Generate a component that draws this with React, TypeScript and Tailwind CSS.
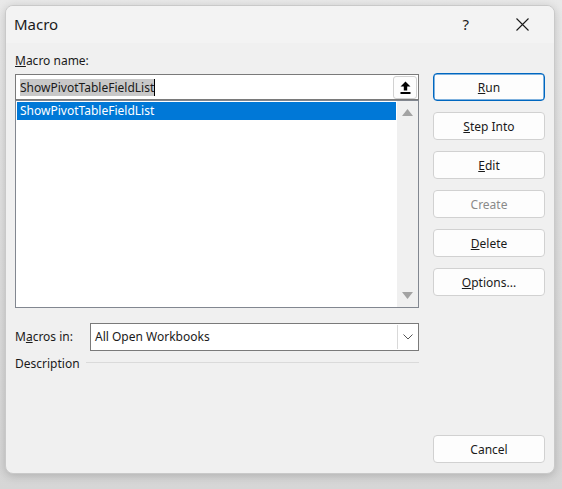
import React from 'react';

const font = { fontFamily: '"Noto Sans", "Open Sans", sans-serif' };

function Btn({ children, focused, disabled }: { children: React.ReactNode; focused?: boolean; disabled?: boolean }) {
  return (
    <button
      className={`h-[28px] w-[112px] rounded-[4px] bg-[#fdfdfd] pt-[2px] text-[12px] ${
        focused ? 'border border-[#0067c0] shadow-[inset_0_0_0_0.5px_#0067c0]' : 'border border-[#d1d1d1]'
      } ${disabled ? 'text-[#8a8a8a]' : 'text-[#1a1a1a]'}`}
    >
      {children}
    </button>
  );
}

export default function App() {
  return (
    <div className="h-[489px] w-[562px] bg-gradient-to-b from-[#e9e9e9] to-[#d6d6d6] pl-[5px] pt-[5px]" style={font}>
      <div className="flex h-[469px] w-[550px] flex-col overflow-hidden rounded-[8px] border border-[#c9c9c9] bg-[#f0f0f0] shadow-[0_2px_10px_rgba(0,0,0,0.18)]">
        {/* title bar */}
        <div className="flex h-[37px] items-center bg-[#f3f3f3] pl-[8px]">
          <span className="text-[15px] text-[#1a1a1a]">Macro</span>
          <span className="ml-auto mr-[47px] text-[15px] text-[#1a1a1a]">?</span>
          <svg width="13" height="13" viewBox="0 0 13 13" className="mr-[25px]">
            <path d="M0.5 0.5 L12.5 12.5 M12.5 0.5 L0.5 12.5" stroke="#1a1a1a" strokeWidth="1.1" />
          </svg>
        </div>

        {/* body */}
        <div className="flex flex-1 pl-[9px] pr-[9px] pb-[10px]">
          <div className="flex w-[404px] flex-col">
            <div className="mt-[10px] h-[20px] text-[12px] leading-[16px] text-[#1a1a1a]">
              <span className="underline">M</span>acro name:
            </div>
            <div className="mt-[1px] flex h-[26px] items-center border border-[#7a7a7a] bg-white pl-[4px]">
              <span className="bg-[#c8c8c8] text-[12px] leading-[17px] text-[#1a1a1a]">ShowPivotTableFieldList</span>
              <span className="h-[17px] w-px bg-black" />
              <div className="ml-auto mr-[1px] flex h-[23px] w-[24px] items-center justify-center rounded-[3px] border border-[#d1d1d1] bg-[#fdfdfd]">
                <svg width="11" height="13" viewBox="0 0 11 13">
                  <path d="M5.5 0.5 L10.5 5.5 L7.2 5.5 L7.2 9.5 L3.8 9.5 L3.8 5.5 L0.5 5.5 Z" fill="#000" />
                  <rect x="0.5" y="11" width="10" height="2" fill="#000" />
                </svg>
              </div>
            </div>
            <div className="flex h-[208px] border border-[#828790] bg-white">
              <div className="flex-1 p-[1px]">
                <div className="h-[18px] bg-[#0078d7] pl-[3px] text-[12px] leading-[18px] text-white">ShowPivotTableFieldList</div>
              </div>
              <div className="flex w-[21px] flex-col items-center justify-between bg-[#f0f0f0] py-[8px]">
                <svg width="11" height="7" viewBox="0 0 11 7">
                  <path d="M5.5 0 L11 7 L0 7 Z" fill="#a3a3a3" />
                </svg>
                <svg width="11" height="7" viewBox="0 0 11 7">
                  <path d="M0 0 L11 0 L5.5 7 Z" fill="#a3a3a3" />
                </svg>
              </div>
            </div>

            <div className="mt-[15px] flex h-[28px] items-center">
              <span className="w-[75px] text-[12px] text-[#1a1a1a]">
                M<span className="underline">a</span>cros in:
              </span>
              <div className="flex h-[28px] flex-1 items-center border border-[#7a7a7a] bg-white pl-[4px]">
                <span className="text-[12px] text-[#1a1a1a]">All Open Workbooks</span>
                <div className="ml-auto mr-[1px] flex h-[24px] w-[20px] items-center justify-center border-l border-[#d9d9d9]">
                  <svg width="10" height="6" viewBox="0 0 10 6">
                    <path d="M0.5 0.5 L5 5 L9.5 0.5" stroke="#555" strokeWidth="1" fill="none" />
                  </svg>
                </div>
              </div>
            </div>

            <div className="mt-[4px] flex items-center">
              <span className="text-[12px] text-[#1a1a1a]">Description</span>
              <div className="ml-[6px] mb-[3px] h-px flex-1 bg-[#dadada]" />
            </div>
          </div>

          <div className="ml-[14px] flex flex-col">
            <div className="mt-[30px] flex flex-col gap-[11px]">
              <Btn focused>
                <span className="underline">R</span>un
              </Btn>
              <Btn>
                <span className="underline">S</span>tep Into
              </Btn>
              <Btn>
                <span className="underline">E</span>dit
              </Btn>
              <Btn disabled>Create</Btn>
              <Btn>
                <span className="underline">D</span>elete
              </Btn>
              <Btn>
                <span className="underline">O</span>ptions...
              </Btn>
            </div>
            <div className="mt-auto">
              <Btn>Cancel</Btn>
            </div>
          </div>
        </div>
      </div>
    </div>
  );
}
